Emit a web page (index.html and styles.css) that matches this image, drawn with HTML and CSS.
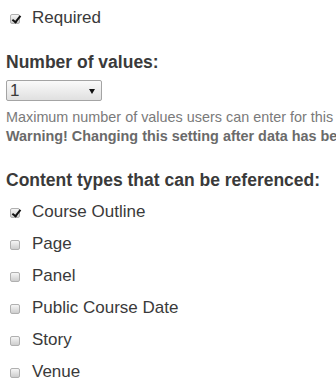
FILE: index.html
```html
<!DOCTYPE html>
<html>
<head>
<link rel="stylesheet" href="styles.css">
</head>
<body>
<div class="form-item">
	<label class="option"><input type="checkbox" checked> Required</label>
</div>

<div class="form-item">
	<label class="title">Number of values:</label>
	<span class="select-wrap">
		<select class="select">
			<option>1</option>
		</select>
	</span>
	<div class="description">Maximum number of values users can enter for this field.</div>
	<div class="description warning">Warning! Changing this setting after data has been created could result in the loss of data!</div>
</div>

<div class="form-item">
	<label class="title">Content types that can be referenced:</label>
	<div class="checkboxes">
		<label class="option"><input type="checkbox" checked> Course Outline</label>
		<label class="option"><input type="checkbox"> Page</label>
		<label class="option"><input type="checkbox"> Panel</label>
		<label class="option"><input type="checkbox"> Public Course Date</label>
		<label class="option"><input type="checkbox"> Story</label>
		<label class="option"><input type="checkbox"> Venue</label>
	</div>
</div>
</body>
</html>
```

FILE: styles.css
```css
body {margin:0;
	padding:2px 6px 0;
	font-family:"Liberation Sans", Arial, sans-serif;
	color:#3a3a3a;
	white-space:nowrap;
	overflow:hidden;}
.form-item + .form-item {margin-top:18px;}
.option {display:flex;
	align-items:center;
	height:32px;
	padding-left:4px;
	font-size:17px;
	color:#3a3a3a;}
.option input {appearance:none;
	-webkit-appearance:none;
	width:10px;
	height:10px;
	margin:2px 12px 0 0;
	border:1px solid #b0b0b0;
	border-radius:2px;
	background:linear-gradient(#f6f6f6, #cdcdcd);
	position:relative;
	flex:none;}
.option input:checked::after {content:"";
	position:absolute;
	left:3px;
	top:-1px;
	width:3px;
	height:7px;
	border:solid #111;
	border-width:0 2px 2px 0;
	transform:rotate(38deg);}
.title {display:block;
	font-size:17.5px;
	line-height:20px;
	font-weight:bold;
	color:#3a3a3a;}
.select-wrap {display:block;
	position:relative;
	width:96px;
	margin-top:8px;}
.select-wrap::after {content:"";
	position:absolute;
	left:83px;
	top:9px;
	border-left:3px solid transparent;
	border-right:3px solid transparent;
	border-top:5px solid #111;
	pointer-events:none;}
.select {appearance:none;
	-webkit-appearance:none;
	display:block;
	width:96px;
	height:21px;
	margin:0;
	font-family:"Liberation Sans", Arial, sans-serif;
	font-size:17px;
	line-height:19px;
	color:#3a3a3a;
	border:1px solid #a4a4a4;
	border-radius:2px;
	background:linear-gradient(#fafafa, #e0e0e0);
	padding:0 3px;}
.description {font-size:14.4px;
	line-height:17px;
	color:#7a7a7a;
	margin-top:8px;}
.warning {font-weight:bold;
	color:#6a6a6a;
	margin-top:2px;}
.form-item:last-child {margin-top:25px;}
.checkboxes {margin-top:6px;}
```
